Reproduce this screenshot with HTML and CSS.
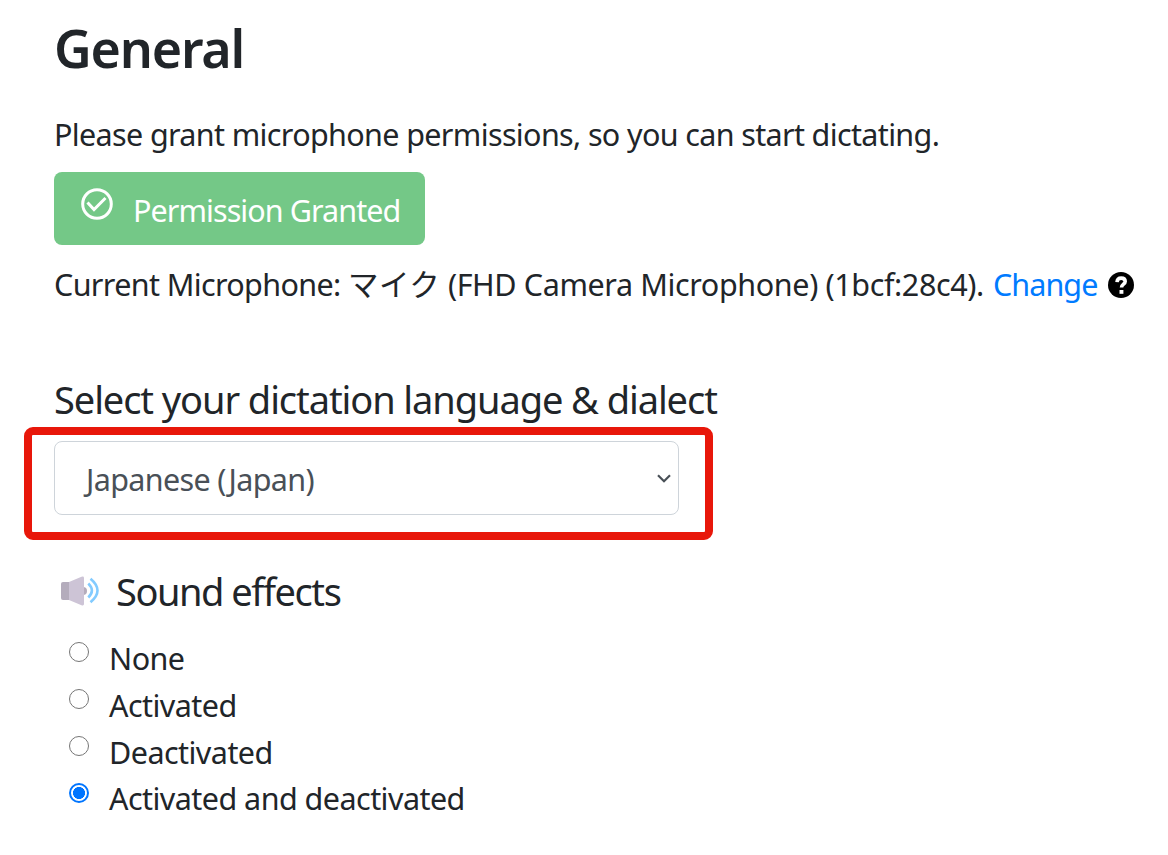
FILE: index.html
```
<!DOCTYPE html>
<html lang="en">
<head>
    <meta charset="utf-8" />
    <title>General</title>
    <link rel="stylesheet" href="styles.css">
</head>
<body>
    <div id="content">
        <h1>General</h1>
        <p class="intro">Please grant microphone permissions, so you can start dictating.</p>
        <button class="btn_granted">
            <svg class="icon_check" viewBox="0 0 32 32">
                <circle cx="16" cy="16" r="14.3" />
                <path d="M6.5 14.500l6.500 7L24.500 10" />
            </svg>
            <span>Permission Granted</span>
        </button>
        <div class="microphone">
            <span>Current Microphone: <span class="jp">マイク</span><span class="mic_model"> (FHD Camera Microphone) (1bcf:28c4).</span></span>
            <a class="change" href="#">Change</a>
            <svg class="icon_help" viewBox="0 0 26 26">
                <circle cx="13" cy="13" r="13" />
                <path d="M9 10.2C9.200 7.300 10.800 6.100 13.200 6.100C15.700 6.100 17.200 7.500 17.200 9.500C17.200 12.100 13.500 12.300 13.500 15.500" />
                <rect x="11.500" y="18" width="3.900" height="3.800" />
            </svg>
        </div>

        <h4 class="language_title">Select your dictation language &amp; dialect</h4>
        <div class="highlight">
            <div class="select">
                <span>Japanese (Japan)</span>
                <svg class="icon_arrow" viewBox="0 0 14 9"><path d="M1 1.300l6 6 6-6" /></svg>
            </div>
        </div>

        <h4 class="sound_title">
            <svg class="icon_sound" viewBox="0 0 38 30">
                <circle cx="22" cy="15" r="4" fill="#b4acbc" />
                <path d="M2 6h6.500v18H2a2 2 0 0 1-2-2V8a2 2 0 0 1 2-2z" fill="#b4acbc" />
                <path d="M8 6L20.500 .7Q23 0 23 2V28Q23 30 20.500 29.300L8 24z" fill="#cdc4d6" />
                <path class="wave" d="M27.300 7.500Q34.500 14.500 27.300 21.500M29.500 2.800Q43.500 14.500 29.500 26.200" />
            </svg>
            <span>Sound effects</span>
        </h4>
        <div class="radios">
            <label class="radio"><input type="radio" name="sound"><span>None</span></label>
            <label class="radio"><input type="radio" name="sound"><span>Activated</span></label>
            <label class="radio"><input type="radio" name="sound"><span>Deactivated</span></label>
            <label class="radio"><input type="radio" name="sound" checked><span>Activated and deactivated</span></label>
        </div>
    </div>
</body>
</html>
```
FILE: styles.css
```
* {
    box-sizing: border-box;
}
body {
    margin: 0;
    background: #ffffff;
    color: #212529;
    font-family: "Noto Sans", "Noto Sans CJK JP", sans-serif;
    font-size: 30.5px;
    line-height: 47px;
    letter-spacing: -0.54px;
    white-space: nowrap;
    overflow: hidden;
}
#content {
    padding: 18px 24px 0 54px;
}
h1 {
    margin: 0;
    font-size: 52px;
    font-weight: 600;
    line-height: 60px;
    letter-spacing: -1.2px;
}
h4 {
    margin: 0;
    font-size: 38px;
    font-weight: 400;
    line-height: 46px;
    letter-spacing: -1.08px;
}
.intro {
    margin: 33px 0 14px;
    letter-spacing: -0.64px;
}
.btn_granted {
    display: flex;
    align-items: center;
    width: 371px;
    height: 73px;
    padding: 3px 0 0 27px;
    border: 0;
    border-radius: 8px;
    background: #74c887;
    color: #ffffff;
    font: inherit;
    letter-spacing: -0.93px;
}
.icon_check {
    flex: none;
    width: 32px;
    height: 32px;
    margin: 0 20px 13px 0;
    fill: none;
    stroke: #ffffff;
    stroke-width: 3;
}
.microphone {
    display: flex;
    align-items: center;
    height: 47px;
    margin-top: 16px;
    letter-spacing: -0.63px;
}
.jp {
    letter-spacing: 0.5px;
}
.mic_model {
    letter-spacing: -0.38px;
}
.change {
    margin-left: 9px;
    color: #007bff;
    letter-spacing: -0.9px;
    text-decoration: none;
}
.icon_help {
    flex: none;
    width: 26px;
    height: 26px;
    margin-left: 10px;
}
.icon_help path {
    fill: none;
    stroke: #ffffff;
    stroke-width: 3.6;
}
.icon_help rect {
    fill: #ffffff;
}
.language_title {
    margin-top: 68px;
}
.highlight {
    width: 689px;
    height: 113px;
    margin: 5px 0 0 -30px;
    padding: 6px 0 0 22px;
    border: 8px solid #e8170a;
    border-radius: 9px;
}
.select {
    display: flex;
    align-items: center;
    justify-content: space-between;
    width: 625px;
    height: 74px;
    padding: 3px 7px 0 31px;
    border: 1px solid #ced4da;
    border-radius: 8px;
    color: #495057;
    letter-spacing: -0.65px;
}
.icon_arrow {
    width: 14px;
    height: 9px;
    margin-bottom: 3px;
    fill: none;
    stroke: #495057;
    stroke-width: 2.2;
}
.sound_title {
    display: flex;
    align-items: center;
    margin-top: 28px;
    padding-left: 7px;
    letter-spacing: -1.45px;
}
.icon_sound {
    flex: none;
    width: 38px;
    height: 30px;
    margin-right: 17px;
}
.wave {
    fill: none;
    stroke: #83cbff;
    stroke-width: 2.6;
}
.radios {
    margin-top: 21px;
}
.radio {
    display: flex;
    align-items: flex-start;
    height: 46.8px;
    padding-left: 15px;
}
.radio input {
    appearance: none;
    flex: none;
    width: 20px;
    height: 20px;
    margin: 7.3px 20px 0 0;
    border: 1.5px solid #767676;
    border-radius: 50%;
}
.radio input:checked {
    border: 2px solid #0075ff;
    background: radial-gradient(circle, #0075ff 5.7px, #ffffff 6.3px);
}
```
